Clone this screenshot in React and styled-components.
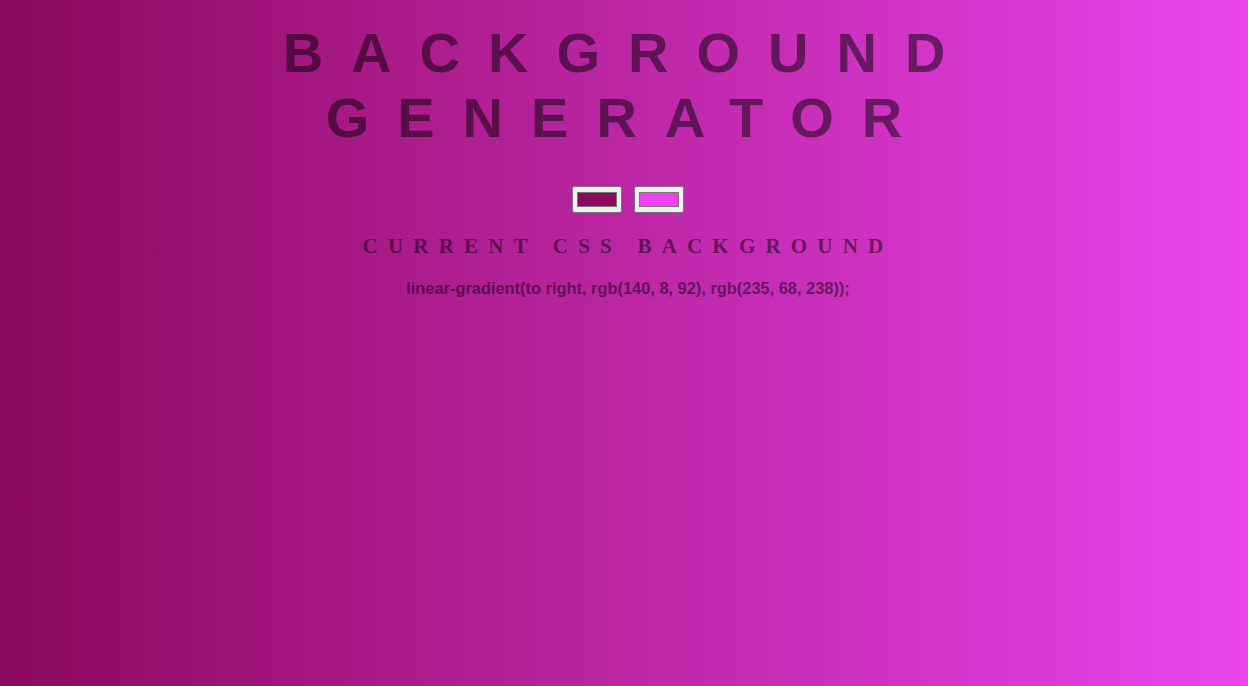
import React, { useState } from 'react';
import styled, { createGlobalStyle } from 'styled-components';

const GlobalStyle = createGlobalStyle`
  html, body {
    margin: 0;
    padding: 0;
    min-height: 100%;
  }
`;

const Page = styled.div`
  min-height: 100vh;
  box-sizing: border-box;
  padding: 20px 0 0 8px;
  text-align: center;
  color: rgba(0, 0, 0, 0.5);
  background: ${({ from, to }) => `linear-gradient(to right, ${from}, ${to})`};
`;

const Title = styled.h1`
  margin: 0;
  font: 700 56px 'Liberation Sans', Arial, sans-serif;
  letter-spacing: 0.5em;
  text-transform: uppercase;
`;

const Pickers = styled.div`
  display: flex;
  justify-content: center;
  gap: 12px;
  margin-top: 36px;
`;

const ColorInput = styled.input.attrs({ type: 'color' })`
  width: 50px;
  height: 27px;
  margin: 0;
`;

const Subtitle = styled.h3`
  margin: 21px 0 0;
  font: 700 21px 'Liberation Serif', 'Times New Roman', serif;
  letter-spacing: 10.2px;
  text-transform: uppercase;
`;

const CssText = styled.p`
  margin: 20px 0 0;
  font: 700 16.4px 'Liberation Sans', Arial, sans-serif;
`;

const toRgb = (hex) => {
  const n = parseInt(hex.slice(1), 16);
  return `rgb(${(n >> 16) & 255}, ${(n >> 8) & 255}, ${n & 255})`;
};

export default function App() {
  const [from, setFrom] = useState('#8c085c');
  const [to, setTo] = useState('#eb44ee');

  return (
    <>
      <GlobalStyle />
      <Page from={from} to={to}>
        <Title>Background Generator</Title>
        <Pickers>
          <ColorInput value={from} onChange={(e) => setFrom(e.target.value)} />
          <ColorInput value={to} onChange={(e) => setTo(e.target.value)} />
        </Pickers>
        <Subtitle>Current CSS Background</Subtitle>
        <CssText>
          linear-gradient(to right, {toRgb(from)}, {toRgb(to)});
        </CssText>
      </Page>
    </>
  );
}
